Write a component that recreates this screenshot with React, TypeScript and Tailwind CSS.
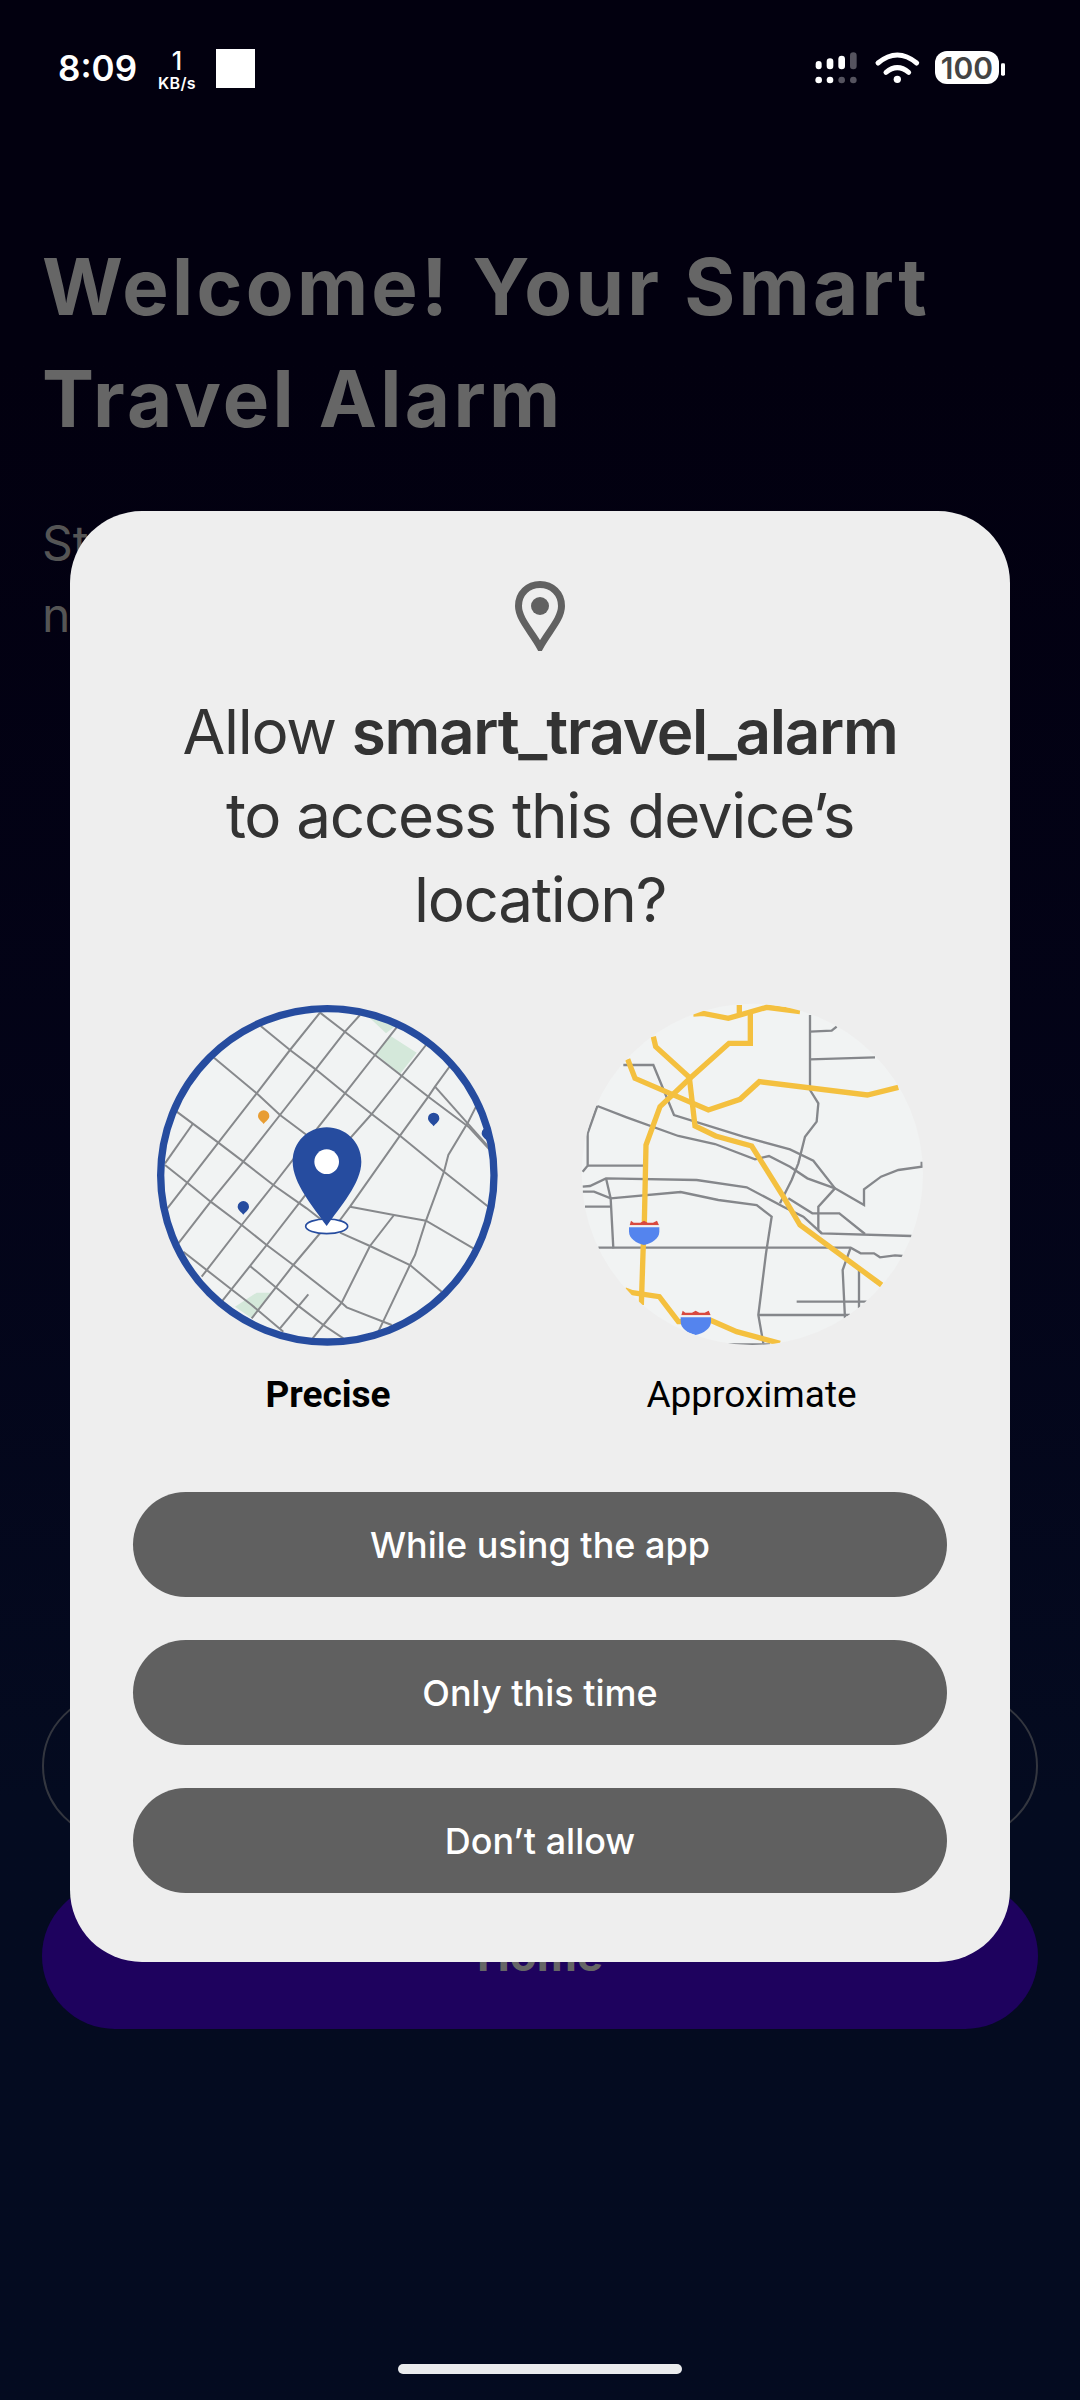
const preciseRoads = [
  "540,68 450,180 350,310 235,458 142,578 82,655",
  "660,75 615,125 527,238 420,375 310,515 212,635 115,760",
  "770,112 705,195 615,310 520,430 400,585 305,705 185,860",
  "858,165 785,258 695,372 630,445 500,610 380,765 245,935",
  "930,228 885,290 865,320 780,437 630,650 600,690 540,730 460,825 335,985",
  "540,68 705,195 865,320 985,410 1050,480",
  "362,108 450,180 527,238 615,310 695,372 780,437 912,545 1045,650",
  "222,203 350,310 420,375 500,435",
  "110,365 235,458 310,515 400,585 500,655 545,690",
  "75,525 142,578 212,635 305,705 380,765 460,825 605,938 620,952 755,1005",
  "130,785 270,895 335,945 430,1025",
  "330,828 478,950 550,1005 610,1045",
  "158,402 75,520",
  "885,290 1045,470",
  "1008,350 985,395 925,495 912,545 858,692 825,795 810,825 715,1025",
  "630,650 762,675 858,692 1000,775",
  "762,675 690,768 605,938 550,1005 518,1045",
  "600,728 690,768 810,825 905,905",
  "505,913 420,1015",
];

const approxRoads = [
  "720,75 720,300 745,340 740,395 705,440 685,520 665,570 630,640",
  "720,125 785,122 800,110",
  "720,208 915,202",
  "160,225 250,225 312,375 520,440 660,478 730,512 795,595 745,650 745,720 755,730 1025,738",
  "82,348 170,382 325,438 435,462 555,508 597,498 660,530 712,565 795,595 882,645 882,598 933,560 985,540 1055,530 1055,515",
  "82,348 53,430 53,527 38,545",
  "53,527 220,527",
  "38,590 60,588 108,565 380,570 530,592 640,650 700,680 755,730",
  "108,565 122,625 130,775",
  "38,605 72,605 122,625 332,606 445,630 560,645 605,680 588,790 565,975 580,1060",
  "45,650 122,650",
  "655,625 727,670 808,670 885,732",
  "85,773 842,773 872,790 912,790 930,802 975,796 998,798",
  "842,773 818,840 825,985",
  "867,835 867,955",
  "680,935 890,935",
  "565,975 840,975",
  "475,1063 600,1063",
];

const approxHighways = [
  "370,72 400,70 475,85 590,52 690,65",
  "508,45 508,70",
  "541,70 541,160 477,160 360,265 270,350 228,465 223,700",
  "220,760 214,945",
  "250,140 257,170 358,262 375,408 437,438 545,468 640,620 690,705 935,885",
  "173,208 195,265 415,360 510,328 568,275 892,315 985,292",
  "165,900 187,908 268,920 325,995 340,995",
  "420,990 500,1025 630,1060",
];

function SmallPin({ x, y, color }: { x: number; y: number; color: string }) {
  return (
    <path
      d={`M${x} ${y + 24} C${x - 6} ${y + 16} ${x - 17} ${y + 10} ${x - 17} ${y} A17 17 0 1 1 ${x + 17} ${y} C${x + 17} ${y + 10} ${x + 6} ${y + 16} ${x} ${y + 24} Z`}
      fill={color}
    />
  );
}

function PreciseMap() {
  return (
    <svg width="380" height="380" viewBox="0 0 1140 1140">
      <defs>
        <clipPath id="precise-clip">
          <circle cx="562" cy="556" r="500" />
        </clipPath>
      </defs>
      <circle cx="562" cy="556" r="500" fill="#f1f3f3" />
      <g clipPath="url(#precise-clip)">
        <polygon points="680,75 770,105 738,130" fill="#d4e8da" />
        <polygon points="752,138 830,188 780,252 708,192" fill="#d4e8da" />
        <polygon points="285,950 350,908 392,908 335,985" fill="#d4e8da" />
        {preciseRoads.map((points) => (
          <polyline key={points} points={points} fill="none" stroke="#87898c" strokeWidth="6" />
        ))}
        <SmallPin x={371} y={378} color="#e89d33" />
        <SmallPin x={881} y={385} color="#264c9f" />
        <SmallPin x={310} y={650} color="#264c9f" />
        <SmallPin x={1042} y={430} color="#264c9f" />
      </g>
      <circle cx="562" cy="556" r="500" fill="none" stroke="#264c9f" strokeWidth="22" />
      <ellipse cx="560" cy="709" rx="63" ry="22" fill="#ffffff" stroke="#264c9f" strokeWidth="5" />
      <path
        d="M560 708 C520 650 458 580 458 515 C458 455 505 412 560 412 C615 412 664 455 664 515 C664 580 600 650 560 708 Z"
        fill="#264c9f"
      />
      <circle cx="560" cy="515" r="37" fill="#ffffff" />
    </svg>
  );
}

function Shield({ x, y }: { x: number; y: number }) {
  return (
    <g transform={`translate(${x} ${y})`}>
      <path
        d="M2 14 L6 0 L14 6 L24 6 L34 6 L45 0 L56 6 L72 6 L84 0 L90 14 Z"
        fill="#d9493e"
      />
      <rect x="0" y="14" width="91" height="6" fill="#f1f3f3" />
      <path d="M0 20 H91 V33 C91 53 68 68 45 73 C23 68 0 53 0 33 Z" fill="#5484ee" />
    </g>
  );
}

function ApproximateMap() {
  return (
    <svg width="380" height="380" viewBox="0 0 1140 1140">
      <defs>
        <clipPath id="approx-clip">
          <circle cx="547" cy="553" r="512" />
        </clipPath>
      </defs>
      <circle cx="547" cy="553" r="512" fill="#f1f3f3" />
      <g clipPath="url(#approx-clip)">
        {approxRoads.map((points) => (
          <polyline key={points} points={points} fill="none" stroke="#85878b" strokeWidth="7" />
        ))}
        {approxHighways.map((points) => (
          <polyline key={points} points={points} fill="none" stroke="#f4c03f" strokeWidth="16" />
        ))}
        <Shield x={177} y={692} />
        <Shield x={332} y={962} />
      </g>
    </svg>
  );
}

function StatusIcons() {
  return (
    <svg width="220" height="60" viewBox="0 0 660 180" className="block">
      <rect x="47" y="78" width="18" height="25" rx="9" fill="#ffffff" />
      <rect x="80" y="70" width="20" height="33" rx="10" fill="#ffffff" />
      <rect x="115" y="62" width="20" height="41" rx="10" fill="#ffffff" />
      <rect x="150" y="52" width="20" height="51" rx="10" fill="#55535f" />
      <circle cx="56" cy="135" r="10" fill="#ffffff" />
      <circle cx="90" cy="135" r="10" fill="#ffffff" />
      <circle cx="125" cy="135" r="10" fill="#55535f" />
      <circle cx="160" cy="135" r="10" fill="#55535f" />
      <path d="M234 84 Q292 36 350 84" fill="none" stroke="#ffffff" strokeWidth="15" strokeLinecap="round" />
      <path d="M258 112 Q292 84 326 112" fill="none" stroke="#ffffff" strokeWidth="15" strokeLinecap="round" />
      <circle cx="292" cy="133" r="11" fill="#ffffff" />
      <rect x="603" y="85" width="12" height="37" rx="4" fill="#ffffff" />
    </svg>
  );
}

function StatusBar() {
  return (
    <div className="flex h-[105px] items-start justify-between pl-[58px] pt-[49px] font-['Inter',sans-serif] text-white">
      <div className="flex items-start">
        <span className="w-[90px] text-[35px] leading-[38px] font-semibold">8:09</span>
        <div className="flex w-[58px] flex-col items-center">
          <span className="text-[25px] leading-[24px] font-medium">1</span>
          <span className="mt-[2px] text-[16px] leading-[16px] font-semibold tracking-[0.3px]">KB/s</span>
        </div>
        <div className="ml-[10px] h-[39px] w-[39px] bg-white" />
      </div>
      <div className="relative -mt-[14px] flex w-[280px]">
        <StatusIcons />
        <div className="absolute left-[135px] top-[16px] flex h-[33px] w-[64px] items-center justify-center rounded-[12px] bg-white text-[30px] leading-none font-semibold text-[#444444]">
          100
        </div>
      </div>
    </div>
  );
}

function PinOutline() {
  return (
    <svg width="50" height="70" viewBox="0 0 50 70" className="block">
      <path
        d="M25 66 C17 51 3.5 38 3.5 25 C3.5 12.5 13 3.5 25 3.5 C37 3.5 46.5 12.5 46.5 25 C46.5 38 33 51 25 66 Z"
        fill="none"
        stroke="#616161"
        strokeWidth="7"
      />
      <circle cx="25" cy="25" r="9" fill="#616161" />
    </svg>
  );
}

function PermissionButton({ label }: { label: string }) {
  return (
    <div className="flex h-[105px] items-center justify-center rounded-full bg-[#606060] text-[36px] font-medium text-white">
      {label}
    </div>
  );
}

function PermissionDialog() {
  return (
    <div className="absolute left-[70px] top-[511px] flex h-[1451px] w-[940px] flex-col rounded-[72px] bg-[#eeeeee] pt-[70px] font-['Inter',sans-serif]">
      <div className="flex justify-center">
        <PinOutline />
      </div>
      <div className="mt-[39px] text-center text-[62px] leading-[84px] tracking-[-1.3px] text-[#333333]">
        <div>
          Allow <span className="font-semibold">smart_travel_alarm</span>
        </div>
        <div>to access this device’s</div>
        <div>location?</div>
      </div>
      <div className="mt-[48px] flex gap-[50px] pl-[70px]">
        <div className="w-[380px]">
          <PreciseMap />
          <div className="mt-[1px] pr-[4px] text-center font-['Roboto',sans-serif] text-[37px] leading-[48px] font-bold text-black">
            Precise
          </div>
        </div>
        <div className="w-[380px]">
          <ApproximateMap />
          <div className="mt-[1px] pr-[17px] text-center font-['Roboto',sans-serif] text-[37px] leading-[48px] text-black">
            Approximate
          </div>
        </div>
      </div>
      <div className="mt-[73px] flex flex-col gap-[43px] px-[63px]">
        <PermissionButton label="While using the app" />
        <PermissionButton label="Only this time" />
        <PermissionButton label="Don’t allow" />
      </div>
    </div>
  );
}

export default function App() {
  return (
    <div className="relative h-[2400px] w-[1080px] overflow-hidden bg-gradient-to-b from-[#02000f] from-15% to-[#040b20] to-75% font-['Inter',sans-serif]">
      <StatusBar />
      <div className="mt-[126px] px-[42px]">
        <h1 className="text-[78px] leading-[112px] font-bold tracking-[3.3px] text-[#666666]">
          Welcome! Your Smart
          <br />
          Travel Alarm
        </h1>
        <p className="mt-[52px] text-[48px] leading-[72px] text-[#555555]">
          St
          <br />n
        </p>
      </div>
      <div className="mt-[1042px] flex flex-col gap-[44px] px-[42px]">
        <div className="h-[146px] rounded-full border-2 border-[#33363f]" />
        <div className="flex h-[146px] items-center justify-center rounded-full bg-[#1e025e] pb-[3px] text-[44px] font-bold text-[#666666]">
          Home
        </div>
      </div>
      <PermissionDialog />
      <div className="absolute bottom-[26px] left-[398px] h-[10px] w-[284px] rounded-full bg-[#eaebed]" />
    </div>
  );
}
